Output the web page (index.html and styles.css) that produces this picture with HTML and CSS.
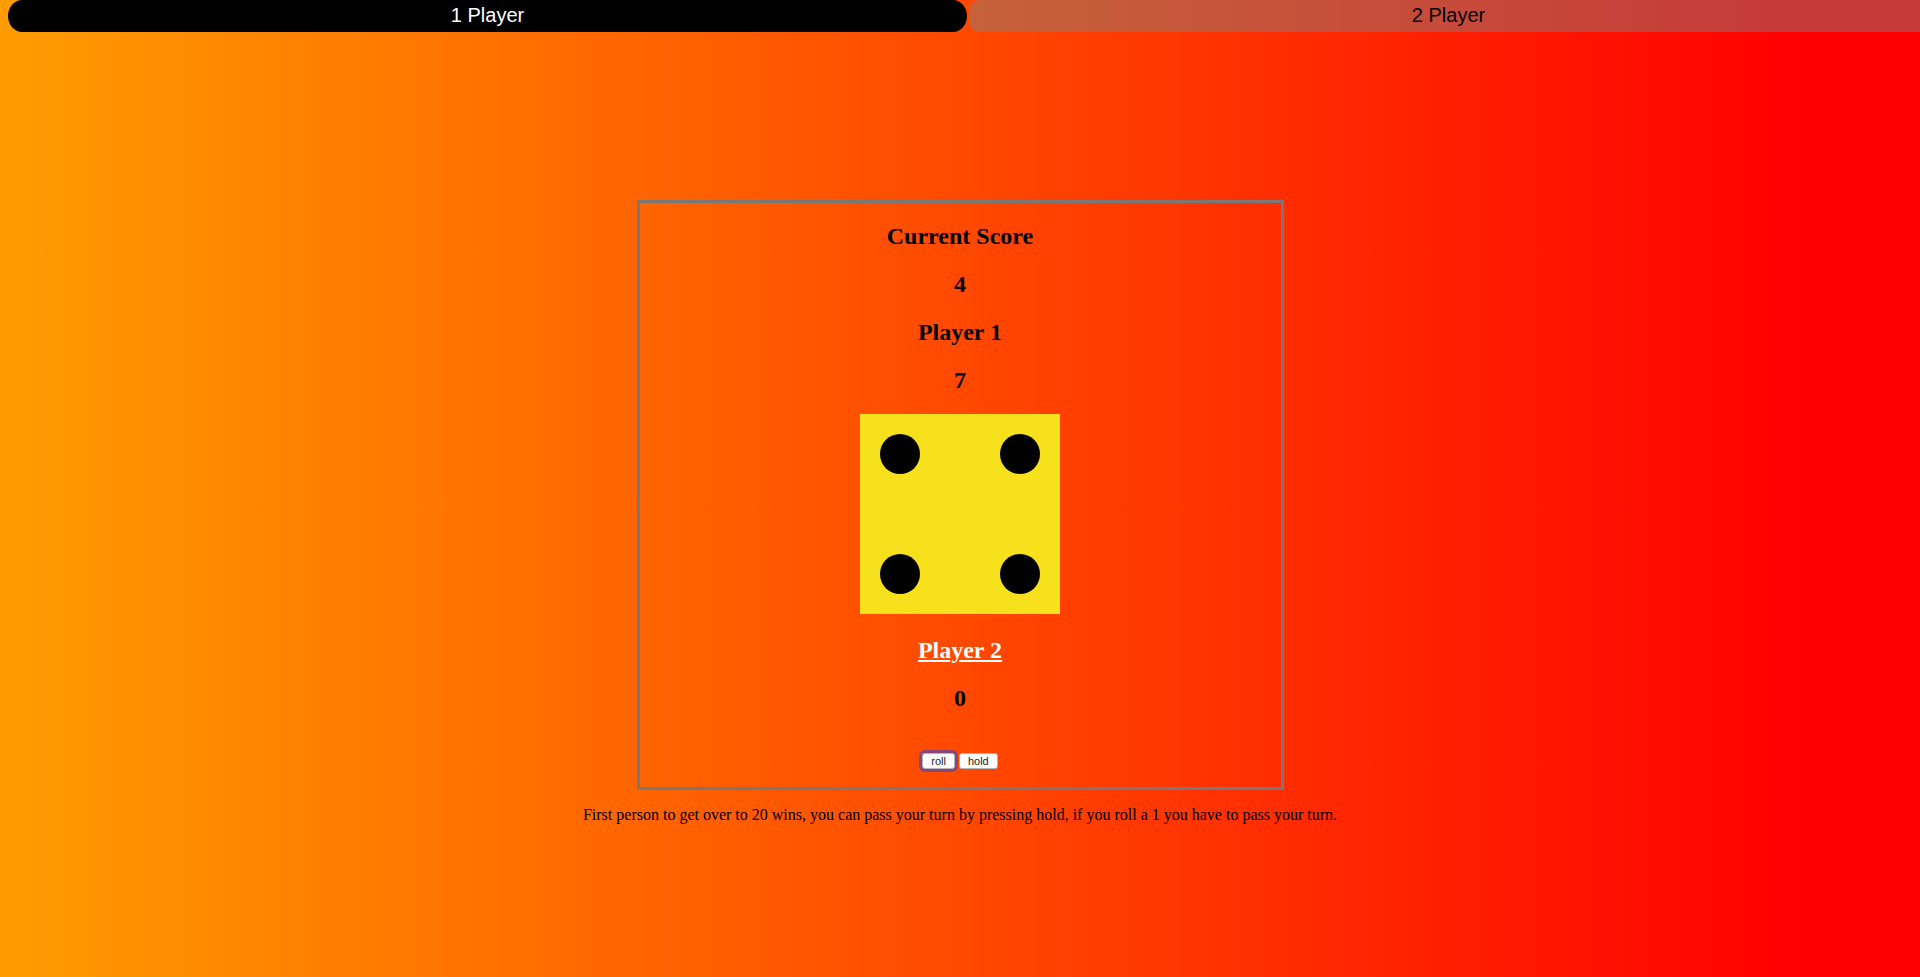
FILE: index.html
```html
<!DOCTYPE html>
<html lang="en">
<head>
<meta charset="utf-8">
<title>Pig Dice</title>
<link rel="stylesheet" href="styles.css">
</head>
<body>
<nav class="modes">
  <button class="mode mode-active">1 Player</button>
  <button class="mode mode-other">2 Player</button>
</nav>
<main class="game">
  <section class="board">
    <h2 class="line">Current Score</h2>
    <h2 class="line">4</h2>
    <h2 class="line">Player 1</h2>
    <h2 class="line">7</h2>
    <div class="die">
      <span class="pip"></span><span class="pip"></span>
      <span class="pip"></span><span class="pip"></span>
    </div>
    <h2 class="line player-turn">Player 2</h2>
    <h2 class="line">0</h2>
    <div class="controls">
      <button class="ctl ctl-focus">roll</button>
      <button class="ctl">hold</button>
    </div>
  </section>
  <p class="rules">First person to get over to 20 wins, you can pass your turn by pressing hold, if you roll a 1 you have to pass your turn.</p>
</main>
</body>
</html>
```

FILE: styles.css
```css
html {
  height: 100%;
  background: linear-gradient(to right, #ff9c00 0px, #ff0000 1800px);
}
body {
  margin: 0;
  min-height: 100%;
  overflow: hidden;
  font-family: "Liberation Serif", "Times New Roman", serif;
  color: #000;
}
.modes {
  display: flex;
  gap: 2px;
  padding-left: 8px;
  height: 32px;
}
.mode {
  flex: 0 0 auto;
  width: 959px;
  height: 32px;
  border: none;
  margin: 0;
  padding: 0 0 2px;
  font-family: "Liberation Sans", Arial, sans-serif;
  font-size: 20px;
  line-height: 30px;
}
.mode-active {
  background: #000;
  color: #fff;
  border-radius: 14px / 16px;
}
.mode-other {
  background: rgba(128, 128, 128, 0.45);
  color: #000;
  border-radius: 10px 2px 3px 10px;
}
.game {
  padding-top: 168px;
}
.board {
  width: 641px;
  margin: 0 auto;
  border: 3px solid #787878;
  display: flex;
  flex-direction: column;
  align-items: center;
}
.line {
  font-size: 24px;
  font-weight: bold;
  line-height: 27.6px;
  margin: 20.2px 0 0;
  text-align: center;
}
.die {
  margin-top: 20px;
  width: 200px;
  height: 200px;
  background: #f6e11c;
  display: grid;
  grid-template-columns: 40px 40px;
  grid-template-rows: 40px 40px;
  justify-content: space-between;
  align-content: space-between;
  padding: 20px;
  box-sizing: border-box;
}
.pip {
  width: 40px;
  height: 40px;
  border-radius: 50%;
  background: #000;
}
.player-turn {
  margin-top: 23px;
  color: #fff;
  text-decoration: underline;
  text-decoration-thickness: 2px;
  text-underline-offset: 2px;
}
.controls {
  display: flex;
  gap: 4px;
  padding: 40px 0 18px;
}
.ctl {
  height: 16px;
  padding: 0 8px;
  margin: 0;
  font-family: "Liberation Sans", Arial, sans-serif;
  font-size: 11px;
  line-height: 14px;
  color: #222;
  background: #fff;
  border: 1px solid #b5b5b5;
  border-radius: 3px;
}
.ctl-focus {
  box-shadow: 0 0 0 3px rgba(40, 70, 220, 0.55);
}
.rules {
  margin: 16px 0;
  text-align: center;
  font-size: 16px;
}
```
